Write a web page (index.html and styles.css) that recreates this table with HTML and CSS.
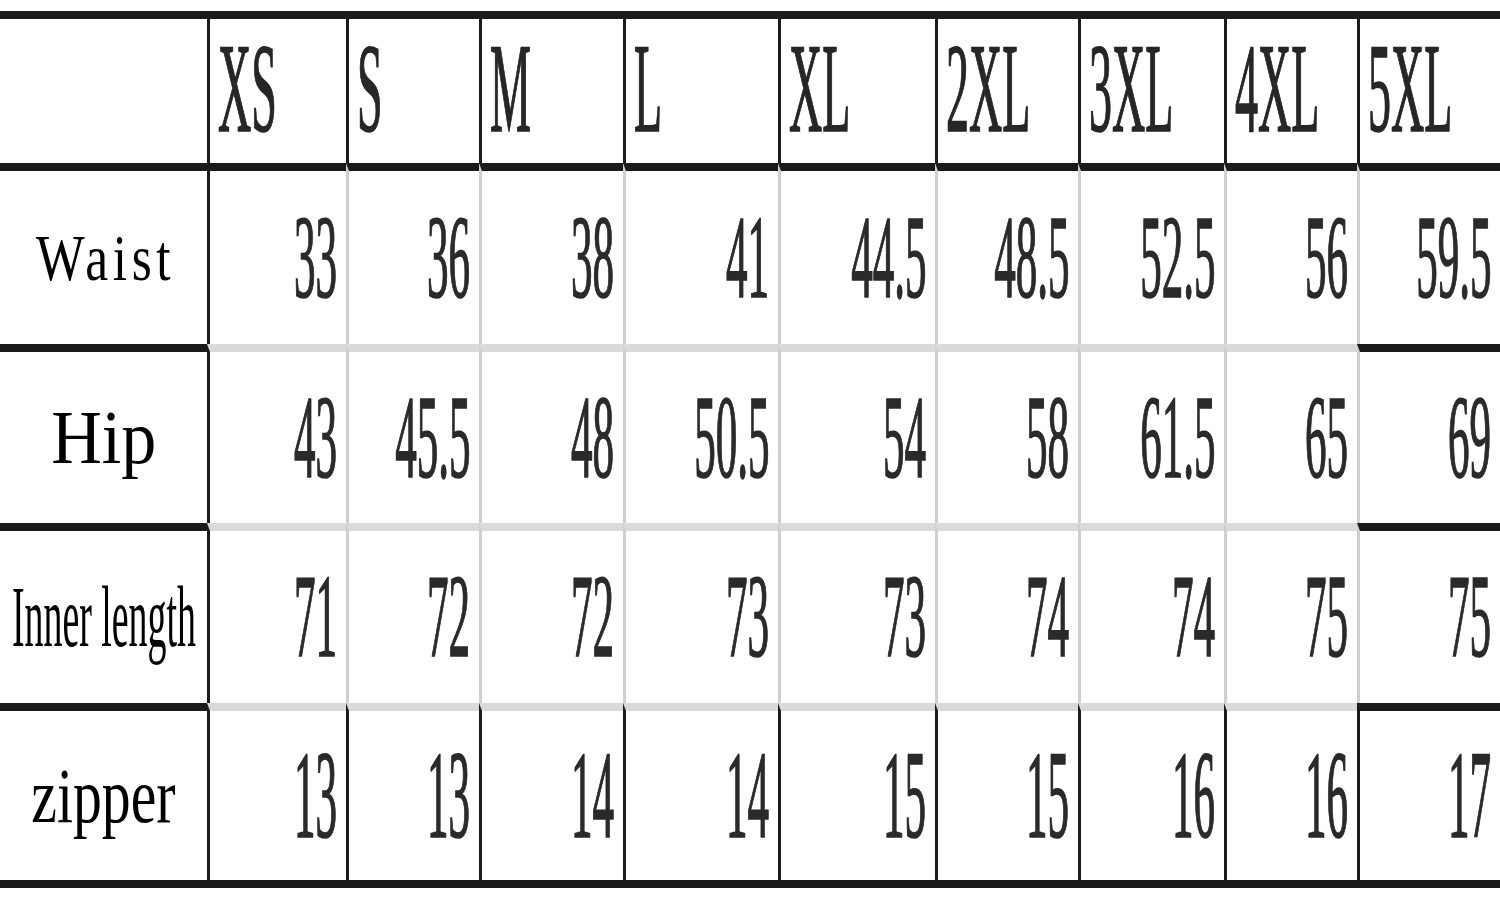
FILE: index.html
```html
<!DOCTYPE html>
<html lang="en">
<head>
<meta charset="utf-8">
<title>Size chart</title>
<link rel="stylesheet" href="styles.css">
</head>
<body>
<div class="chart">
  <div class="cell corner"></div>
  <div class="cell head"><span class="h">XS</span></div>
  <div class="cell head"><span class="h">S</span></div>
  <div class="cell head"><span class="h">M</span></div>
  <div class="cell head"><span class="h">L</span></div>
  <div class="cell head"><span class="h">XL</span></div>
  <div class="cell head"><span class="h">2XL</span></div>
  <div class="cell head"><span class="h">3XL</span></div>
  <div class="cell head"><span class="h">4XL</span></div>
  <div class="cell head"><span class="h">5XL</span></div>

  <div class="cell label"><span class="lbl waist">Waist</span></div>
  <div class="cell num first dark-top"><span class="n">33</span></div>
  <div class="cell num dark-top"><span class="n">36</span></div>
  <div class="cell num dark-top"><span class="n">38</span></div>
  <div class="cell num dark-top"><span class="n">41</span></div>
  <div class="cell num dark-top"><span class="n">44.5</span></div>
  <div class="cell num dark-top"><span class="n">48.5</span></div>
  <div class="cell num dark-top"><span class="n">52.5</span></div>
  <div class="cell num dark-top"><span class="n">56</span></div>
  <div class="cell num dark-top"><span class="n">59.5</span></div>

  <div class="cell label"><span class="lbl hip">Hip</span></div>
  <div class="cell num first"><span class="n">43</span></div>
  <div class="cell num"><span class="n">45.5</span></div>
  <div class="cell num"><span class="n">48</span></div>
  <div class="cell num"><span class="n">50.5</span></div>
  <div class="cell num"><span class="n">54</span></div>
  <div class="cell num"><span class="n">58</span></div>
  <div class="cell num"><span class="n">61.5</span></div>
  <div class="cell num"><span class="n">65</span></div>
  <div class="cell num dark-top"><span class="n">69</span></div>

  <div class="cell label"><span class="lbl inner">Inner length</span></div>
  <div class="cell num first"><span class="n">71</span></div>
  <div class="cell num"><span class="n">72</span></div>
  <div class="cell num"><span class="n">72</span></div>
  <div class="cell num"><span class="n">73</span></div>
  <div class="cell num"><span class="n">73</span></div>
  <div class="cell num"><span class="n">74</span></div>
  <div class="cell num"><span class="n">74</span></div>
  <div class="cell num"><span class="n">75</span></div>
  <div class="cell num dark-top"><span class="n">75</span></div>

  <div class="cell label"><span class="lbl zip">zipper</span></div>
  <div class="cell num first"><span class="n tall">13</span></div>
  <div class="cell num dark-left"><span class="n tall">13</span></div>
  <div class="cell num dark-left"><span class="n tall">14</span></div>
  <div class="cell num dark-left"><span class="n tall">14</span></div>
  <div class="cell num dark-left"><span class="n tall">15</span></div>
  <div class="cell num dark-left"><span class="n tall">15</span></div>
  <div class="cell num dark-left"><span class="n tall">16</span></div>
  <div class="cell num dark-left"><span class="n tall">16</span></div>
  <div class="cell num dark-left dark-top"><span class="n tall">17</span></div>
</div>
</body>
</html>
```

FILE: styles.css
```css
html, body {
  margin: 0;
  padding: 0;
  background: #ffffff;
}

body {
  width: 1500px;
  height: 924px;
  overflow: hidden;
  font-family: "Liberation Serif", "Times New Roman", serif;
  color: #1c1c1c;
}

.chart {
  margin-top: 11px;
  width: 1500px;
  display: grid;
  grid-template-columns: 207px 139px 133px 144px 155px 157px 143px 146px 133px 143px;
  grid-template-rows: 144px 181px 179px 180px 177px;
  border-top: 8px solid #1b1b1b;
  border-bottom: 8px solid #1b1b1b;
}

.cell {
  box-sizing: border-box;
  display: flex;
  align-items: center;
  min-width: 0;
  border-left: 3px solid #cfcfcf;
  border-top: 8px solid #dadada;
}

.corner {
  border: none;
}

.head {
  border-top: none;
  border-left-color: #1b1b1b;
  justify-content: flex-start;
  padding-left: 8px;
  padding-bottom: 5px;
}

.label {
  border-left: none;
  border-top-color: #1b1b1b;
  justify-content: center;
  color: #000;
}

.num {
  justify-content: flex-end;
  padding-right: 9px;
}

.first,
.dark-left {
  border-left-color: #1b1b1b;
}

.dark-top {
  border-top-color: #1b1b1b;
}

.h {
  display: inline-block;
  flex: none;
  white-space: nowrap;
  font-size: 126px;
  line-height: 1;
  color: #262626;
  -webkit-text-stroke: 1.5px #262626;
  transform: scaleX(0.365);
  transform-origin: left center;
  text-shadow: 0 0 1.5px rgba(0, 0, 0, 0.3);
}

.n {
  display: inline-block;
  flex: none;
  white-space: nowrap;
  font-size: 118px;
  line-height: 1;
  color: #2a2a2a;
  -webkit-text-stroke: 1.5px #2a2a2a;
  transform: scaleX(0.365);
  transform-origin: right center;
  text-shadow: 0 0 1.5px rgba(0, 0, 0, 0.3);
}

.n.tall {
  transform: scaleX(0.365) scaleY(1.06);
}

.lbl {
  display: inline-block;
  flex: none;
  white-space: nowrap;
  line-height: 1;
  transform-origin: center center;
}

.waist {
  font-size: 66px;
  letter-spacing: 6px;
  padding-left: 6px;
  transform: scaleX(0.78);
}

.hip {
  font-size: 77px;
  transform: scaleX(0.91);
}

.inner {
  font-size: 86px;
  transform: scaleX(0.44);
}

.zip {
  font-size: 78px;
  transform: scaleX(0.74);
}
```
